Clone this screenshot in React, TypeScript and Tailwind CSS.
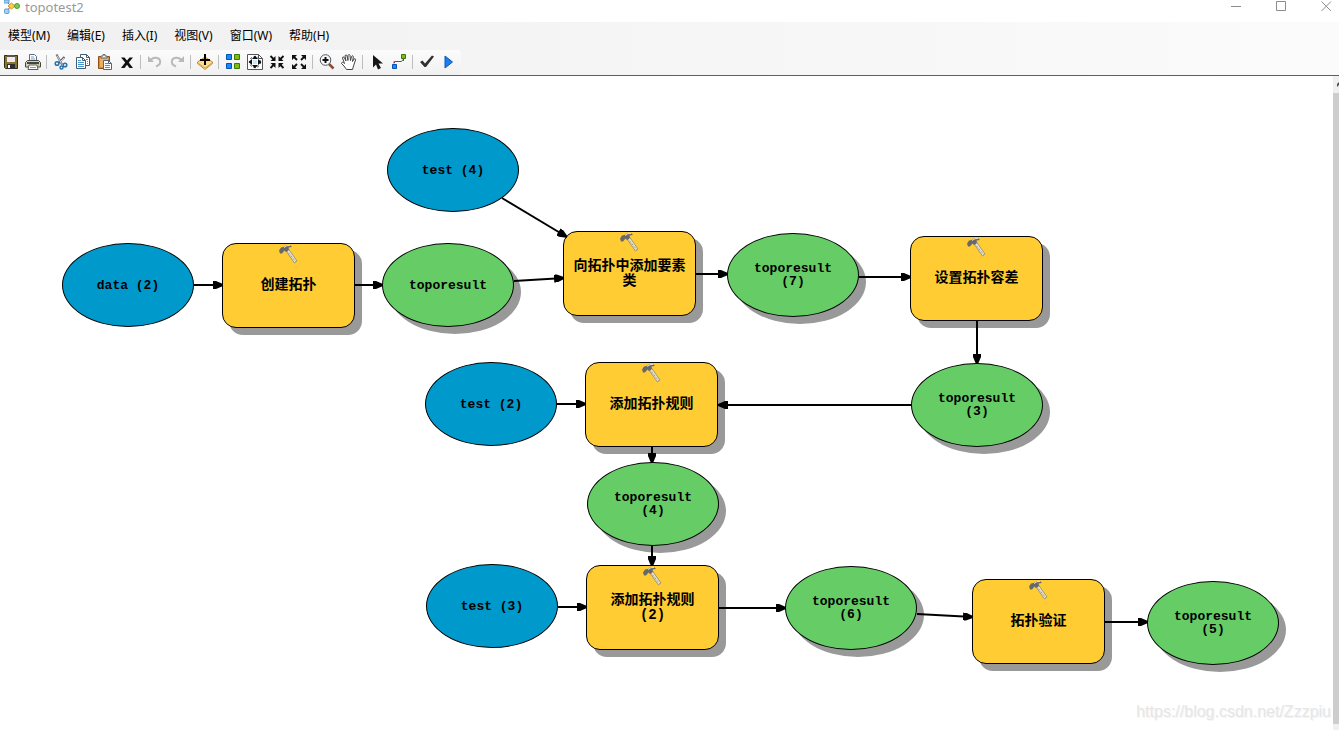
import type { ReactNode } from 'react';

type NodeKind = 'input' | 'tool' | 'output';

interface ModelNode {
  id: string;
  kind: NodeKind;
  x: number;
  y: number;
  lines: string[];
}

interface Edge {
  from: [number, number];
  to: [number, number];
}

const nodes: ModelNode[] = [
  { id: 'data2', kind: 'input', x: 62, y: 167, lines: ['data (2)'] },
  { id: 'create', kind: 'tool', x: 222, y: 167, lines: ['创建拓扑'] },
  { id: 'result', kind: 'output', x: 382, y: 167, lines: ['toporesult'] },
  { id: 'test4', kind: 'input', x: 387, y: 52, lines: ['test (4)'] },
  { id: 'addClass', kind: 'tool', x: 563, y: 155, lines: ['向拓扑中添加要素', '类'] },
  { id: 'result7', kind: 'output', x: 727, y: 157, lines: ['toporesult', '(7)'] },
  { id: 'tolerance', kind: 'tool', x: 910, y: 160, lines: ['设置拓扑容差'] },
  { id: 'result3', kind: 'output', x: 911, y: 287, lines: ['toporesult', '(3)'] },
  { id: 'test2', kind: 'input', x: 425, y: 286, lines: ['test (2)'] },
  { id: 'addRule', kind: 'tool', x: 585, y: 286, lines: ['添加拓扑规则'] },
  { id: 'result4', kind: 'output', x: 587, y: 386, lines: ['toporesult', '(4)'] },
  { id: 'test3', kind: 'input', x: 426, y: 488, lines: ['test (3)'] },
  { id: 'addRule2', kind: 'tool', x: 586, y: 489, lines: ['添加拓扑规则', '(2)'] },
  { id: 'result6', kind: 'output', x: 785, y: 490, lines: ['toporesult', '(6)'] },
  { id: 'validate', kind: 'tool', x: 972, y: 503, lines: ['拓扑验证'] },
  { id: 'result5', kind: 'output', x: 1147, y: 505, lines: ['toporesult', '(5)'] },
];

const edges: Edge[] = [
  { from: [194, 209], to: [223, 209] },
  { from: [355, 209], to: [383, 209] },
  { from: [502, 122], to: [567, 161] },
  { from: [514, 205], to: [564, 202] },
  { from: [696, 198], to: [728, 198] },
  { from: [859, 201], to: [911, 201] },
  { from: [977, 245], to: [977, 288] },
  { from: [911, 329], to: [718, 329] },
  { from: [557, 328], to: [586, 328] },
  { from: [652, 371], to: [652, 387] },
  { from: [652, 470], to: [652, 490] },
  { from: [558, 531], to: [587, 531] },
  { from: [719, 532], to: [786, 532] },
  { from: [917, 538], to: [973, 541] },
  { from: [1105, 546], to: [1148, 546] },
];

const nodeStyles: Record<NodeKind, string> = {
  input: 'w-[132px] h-[84px] rounded-[50%] bg-[#0099cc] text-[13px] leading-[13px]',
  tool: 'w-[133px] h-[85px] rounded-[14px] bg-[#ffcc33] text-sm leading-[15px] shadow-[7px_7px_0_#999999]',
  output: 'w-[132px] h-[84px] rounded-[50%] bg-[#66cc66] text-[13px] leading-[13px] shadow-[7px_7px_0_#999999]',
};

const menus = ['模型(M)', '编辑(E)', '插入(I)', '视图(V)', '窗口(W)', '帮助(H)'];

function Icon({ children }: { children: ReactNode }) {
  return (
    <svg width="16" height="16" viewBox="0 0 16 16" fill="none" aria-hidden="true">
      {children}
    </svg>
  );
}

const toolGroups: { label: string; icon: ReactNode }[][] = [
  [
    {
      label: '保存',
      icon: (
        <Icon>
          <path d="M1.500 1.500h13v13h-12l-1-1z" fill="#8a7430" stroke="#302a18" />
          <path d="M4 1h8v7H4z" fill="#ececec" />
          <path d="M4 1h8v2H4z" fill="#56544e" />
          <path d="M4 10h8v5H4z" fill="#302f2d" />
          <path d="M5 11h2v3H5z" fill="#fff" />
        </Icon>
      ),
    },
    {
      label: '打印',
      icon: (
        <Icon>
          <path d="M4.500 6V.500h5l2 2V6" fill="#fff" stroke="#5f6d7c" />
          <path d="M6 3h3M6 5h4" stroke="#6fa3cf" />
          <path d="M2.500 6.500h11l2 2v4.500h-15V8.500z" fill="#d6d3bd" stroke="#45453f" />
          <path d="M2 9h12" stroke="#45453f" strokeWidth="2" />
          <path d="M13 11h1" stroke="#73b52b" />
          <path d="M4 11h8l1 4.500H3z" fill="#fff" stroke="#5c5c5c" />
          <path d="M5 13.500h6" stroke="#999" />
        </Icon>
      ),
    },
  ],
  [
    {
      label: '剪切',
      icon: (
        <Icon>
          <path d="M3.500.500l5.500 10M11.500 3L5.500 9" stroke="#59636c" strokeWidth="2" />
          <path d="M4 1.500l4.500 8M11 4L7 8" stroke="#d8dde2" />
          <circle cx="4" cy="9.500" r="1.800" stroke="#2873ad" strokeWidth="1.500" />
          <circle cx="12" cy="11" r="1.800" stroke="#2873ad" strokeWidth="1.500" />
          <circle cx="8.500" cy="13.500" r="1.500" stroke="#2873ad" strokeWidth="1.500" />
        </Icon>
      ),
    },
    {
      label: '复制',
      icon: (
        <Icon>
          <path d="M5.500.500h6l3 3v8h-9z" fill="#fff" stroke="#445e77" />
          <path d="M11.500.500v3h3" stroke="#445e77" />
          <path d="M1.500 3.500h6l3 3v8h-9z" fill="#fff" stroke="#445e77" />
          <path d="M7.500 3.500v3h3" stroke="#445e77" />
          <path d="M3 6.500h3M3 8.500h6M3 10.500h6M3 12.500h6M11 5.500h2M12 7.500h1M12 9.500h1" stroke="#4594d0" />
        </Icon>
      ),
    },
    {
      label: '粘贴',
      icon: (
        <Icon>
          <path d="M1.500 2.500h11v12h-11z" fill="#d18a3c" stroke="#925016" />
          <path d="M3 4h8v9H3z" fill="#ebb066" />
          <path d="M4 4V2h2V.500h2V2h2v2z" fill="#f2f2f2" stroke="#60666c" />
          <path d="M6.500 6.500h5l3 3v6h-8z" fill="#fff" stroke="#526579" />
          <path d="M11.500 6.500v3h3" stroke="#526579" />
          <path d="M8 9.500h3M8 11.500h5M8 13.500h5" stroke="#4594d0" />
        </Icon>
      ),
    },
    {
      label: '删除',
      icon: (
        <Icon>
          <path d="M2 3.500h3.500L8 6.500l2.500-3H14L9.800 8.500 14 14h-3.500L8 10.800 5.500 14H2l4.200-5.500z" fill="#111" />
        </Icon>
      ),
    },
  ],
  [
    {
      label: '撤销',
      icon: (
        <Icon>
          <path d="M4 5.500c3-3 8-2 9 1 1 3-1.500 5-4 6" stroke="#b9b9b9" strokeWidth="2" />
          <path d="M1 2v6h6z" fill="#b9b9b9" />
        </Icon>
      ),
    },
    {
      label: '恢复',
      icon: (
        <Icon>
          <path d="M12 5.500c-3-3-8-2-9 1-1 3 1.500 5 4 6" stroke="#b9b9b9" strokeWidth="2" />
          <path d="M15 2v6H9z" fill="#b9b9b9" />
        </Icon>
      ),
    },
  ],
  [
    {
      label: '添加数据或工具',
      icon: (
        <Icon>
          <path d="M.500 8L8 3l7.500 5v1.500L8 15.500.500 9.500z" fill="#ffdc8a" stroke="#bd8b3d" />
          <path d="M1 9l7 5 7-5" stroke="#d3a354" />
          <path d="M8 0v11M3 6h10" stroke="#000" strokeWidth="2" />
        </Icon>
      ),
    },
  ],
  [
    {
      label: '自动布局',
      icon: (
        <Icon>
          <path d="M1.500.500h5v5h-5zM1.500 9.500h5v5h-5z" fill="#168cff" stroke="#0751b5" />
          <path d="M9.500.500h5v5h-5zM9.500 9.500h5v5h-5z" fill="#7fbd12" stroke="#3e7905" />
        </Icon>
      ),
    },
    {
      label: '全图',
      icon: (
        <Icon>
          <path d="M.500.500h11l4 4v11H.500z" fill="#fff" stroke="#555" />
          <path d="M11.500.500v4h4" stroke="#555" />
          <circle cx="8" cy="8" r="5.500" stroke="#333" strokeDasharray="2 2" />
          <path d="M6 6h4v4H6z" fill="#cfe6f4" />
          <path d="M8 1.500L11 5H5zM8 14.500L11 11H5zM1.500 8L5 5v6zM14.500 8L11 5v6z" fill="#111" />
        </Icon>
      ),
    },
    {
      label: '固定缩小',
      icon: (
        <Icon>
          <path d="M1.500 2l4 4M14.500 2l-4 4M1.500 14l4-4M14.500 14l-4-4" stroke="#111" strokeWidth="1.800" />
          <path d="M6.500 2v5h-5zM9.500 2v5h5zM6.500 14V9h-5zM9.500 14V9h5z" fill="#111" />
        </Icon>
      ),
    },
    {
      label: '固定放大',
      icon: (
        <Icon>
          <path d="M2 2l4 4M14 2l-4 4M2 14l4-4M14 14l-4-4" stroke="#111" strokeWidth="1.800" />
          <path d="M1 1h5L1 6zM15 1h-5l5 5zM1 15h5l-5-5zM15 15h-5l5-5z" fill="#111" />
        </Icon>
      ),
    },
  ],
  [
    {
      label: '放大',
      icon: (
        <Icon>
          <path d="M10 10l4.500 4.500" stroke="#8c4a37" strokeWidth="2.500" />
          <circle cx="6.500" cy="6" r="5.300" fill="#f7fafc" stroke="#555" />
          <path d="M6.500 3v6M3.500 6h6" stroke="#111" strokeWidth="2" />
        </Icon>
      ),
    },
    {
      label: '平移',
      icon: (
        <Icon>
          <path d="M5.500 15.500L3 12 .500 9.500c0-1.500 1.500-1.500 3 0L1.500 4c0-1.500 1.500-1.500 2 0l1.500 3-1-5c.300-1.500 1.700-1.500 2 0l1 4.500V1.500c.500-1.300 1.800-1.300 2 0l.500 5 1-4c.600-1.200 1.800-1 1.800.500l-.800 4.500 1.500-2.500c1-.800 1.800 0 1.500 1l-2 6-1 3.500z" fill="#fff" stroke="#444" />
        </Icon>
      ),
    },
  ],
  [
    {
      label: '选择',
      icon: (
        <Icon>
          <path d="M4 1v12.500l3-3 2 5 3-1.500-2.500-4.500H14z" fill="#161616" />
        </Icon>
      ),
    },
    {
      label: '连接',
      icon: (
        <Icon>
          <path d="M3.500 9V7.500h7L12.500 5" stroke="#555" />
          <path d="M3 7.500v2M12.500 5v2" stroke="#e02020" />
          <path d="M1.500 10.500h4v4h-4z" fill="#168cff" stroke="#0751b5" />
          <path d="M10.500.500h4v4h-4z" fill="#7fbd12" stroke="#3e7905" />
        </Icon>
      ),
    },
  ],
  [
    {
      label: '验证',
      icon: (
        <Icon>
          <path d="M1 8l2.500-1.500L6 9.500l7-8L15 2.500 7 13H5.500z" fill="#2f2f2f" />
        </Icon>
      ),
    },
    {
      label: '运行',
      icon: (
        <Icon>
          <path d="M4 2v12L11.500 8z" fill="#1b7df0" stroke="#0d57b8" />
        </Icon>
      ),
    },
  ],
];

function TitleBar() {
  return (
    <header className="flex h-[22px] items-start bg-white pl-1 pr-[7px] text-[#999999]">
      <svg width="16" height="14" viewBox="0 0 16 14" aria-hidden="true">
        <path d="M3 2l4 4-4 5M7 6h7" stroke="#555" fill="none" />
        <path d="M0 0h5v3H0z" fill="#9fd0f5" stroke="#5f9fd2" />
        <rect x="0.500" y="9" width="4.500" height="4.500" rx="1" fill="#9fd0f5" stroke="#5f9fd2" />
        <path d="M4 6l3.500-3L11 6 7.500 9z" fill="#ffcd3d" stroke="#d6961c" />
        <circle cx="13" cy="6" r="2.500" fill="#7ccb50" stroke="#4f9a2c" />
      </svg>
      <h1 className="ml-[5px] text-[13px] leading-[14px]">topotest2</h1>
      <div className="ml-auto flex gap-[34px] pt-px">
        <button aria-label="最小化">
          <svg width="11" height="11" fill="none" stroke="#8c8c8c" className="block">
            <path d="M0 5.500h10" />
          </svg>
        </button>
        <button aria-label="最大化">
          <svg width="11" height="11" fill="none" stroke="#8c8c8c" className="block">
            <path d="M.500.500h9v9h-9z" />
          </svg>
        </button>
        <button aria-label="关闭">
          <svg width="11" height="11" fill="none" stroke="#8c8c8c" className="block">
            <path d="M.500.500l9.500 9.500M10 .500L.500 10" />
          </svg>
        </button>
      </div>
    </header>
  );
}

function MenuBar() {
  return (
    <nav className="flex h-7 items-center gap-px text-xs text-black">
      {menus.map((menu) => (
        <button key={menu} className="px-2 leading-4">
          {menu}
        </button>
      ))}
    </nav>
  );
}

function Toolbar() {
  return (
    <div
      role="toolbar"
      className="flex h-[25px] w-fit items-center rounded-r-sm bg-linear-to-b from-[#fcfcfc] to-[#f0f0f0] pb-0.5 pr-px"
    >
      {toolGroups.map((group, index) => (
        <div key={group[0].label} className="flex items-center">
          {index > 0 && <span className="ml-0.5 mr-[3px] h-[14px] w-px bg-[#bdbdbd]" />}
          {group.map((tool) => (
            <button key={tool.label} aria-label={tool.label} className="flex w-[22px] justify-center">
              {tool.icon}
            </button>
          ))}
        </div>
      ))}
    </div>
  );
}

function Hammer() {
  return (
    <svg
      width="22"
      height="20"
      viewBox="0 0 22 20"
      className="absolute left-1/2 top-0 -translate-x-1/2"
      aria-hidden="true"
    >
      <path d="M8 7l8.500 12 2.500-2L10.500 5z" fill="#e9e3d2" stroke="#8d8672" strokeWidth="0.800" />
      <path d="M9.500 7.500l8 10" stroke="#8f8770" strokeDasharray="1 1" />
      <path d="M1 6.500l2-3 2.500-.500L8 1.500l4-.500 2 2-3.500.500.500 2.500L8 8 6.500 6.500 4 9.500H2z" fill="#68686a" />
      <path d="M6 3.500l3-1.800 3-.200" stroke="#e4e4e4" fill="none" />
    </svg>
  );
}

function DiagramNode({ node }: { node: ModelNode }) {
  return (
    <div
      className={`absolute flex flex-col items-center justify-center border border-black font-['Liberation_Mono','Noto_Sans_CJK_SC',monospace] font-bold text-black ${nodeStyles[node.kind]}`}
      style={{ left: node.x, top: node.y }}
    >
      {node.kind === 'tool' && <Hammer />}
      {node.lines.map((line) => (
        <span key={line} className="whitespace-nowrap">
          {line}
        </span>
      ))}
    </div>
  );
}

function Canvas() {
  return (
    <main className="relative min-h-[640px] min-w-0 flex-1 overflow-hidden bg-white">
      {nodes.map((node) => (
        <DiagramNode key={node.id} node={node} />
      ))}
      {/* connectors run over the node shadows */}
      <svg className="absolute inset-0 h-full w-full" aria-hidden="true">
        <defs>
          <marker
            id="arrow"
            markerUnits="userSpaceOnUse"
            markerWidth="10"
            markerHeight="8"
            refX="10"
            refY="4"
            orient="auto"
          >
            <path d="M0 0h3l7 3v2L3 8H0z" />
          </marker>
        </defs>
        {edges.map(({ from, to }) => (
          <line
            key={from.join()}
            x1={from[0]}
            y1={from[1]}
            x2={to[0]}
            y2={to[1]}
            stroke="#000"
            strokeWidth="2"
            markerEnd="url(#arrow)"
          />
        ))}
      </svg>
      <p className="absolute bottom-2 right-0.5 font-['Liberation_Sans',sans-serif] text-base leading-5 text-[#e6e6e6] [text-shadow:1px_1px_0_#f4f4f4]">
        https://blog.csdn.net/Zzzpiu
      </p>
    </main>
  );
}

function ScrollBar() {
  return (
    <div className="flex w-1.5 flex-col bg-[#f0f0f0]">
      <div className="flex h-[17px] items-center justify-end">
        <svg width="2" height="5" aria-hidden="true">
          <path d="M0 2l2-2v3L0 5z" fill="#505050" />
        </svg>
      </div>
      <div className="mb-1.5 flex-1 bg-[#cdcdcd]" />
    </div>
  );
}

export default function App() {
  return (
    <div className="flex min-h-screen flex-col font-['Noto_Sans','Noto_Sans_CJK_SC',sans-serif]">
      <TitleBar />
      <div className="border-b border-[#5f5f5f] bg-linear-to-r from-[#f0f0f0] to-[#fbfbfb]">
        <MenuBar />
        <Toolbar />
      </div>
      <div className="flex flex-1">
        <Canvas />
        <ScrollBar />
      </div>
    </div>
  );
}
